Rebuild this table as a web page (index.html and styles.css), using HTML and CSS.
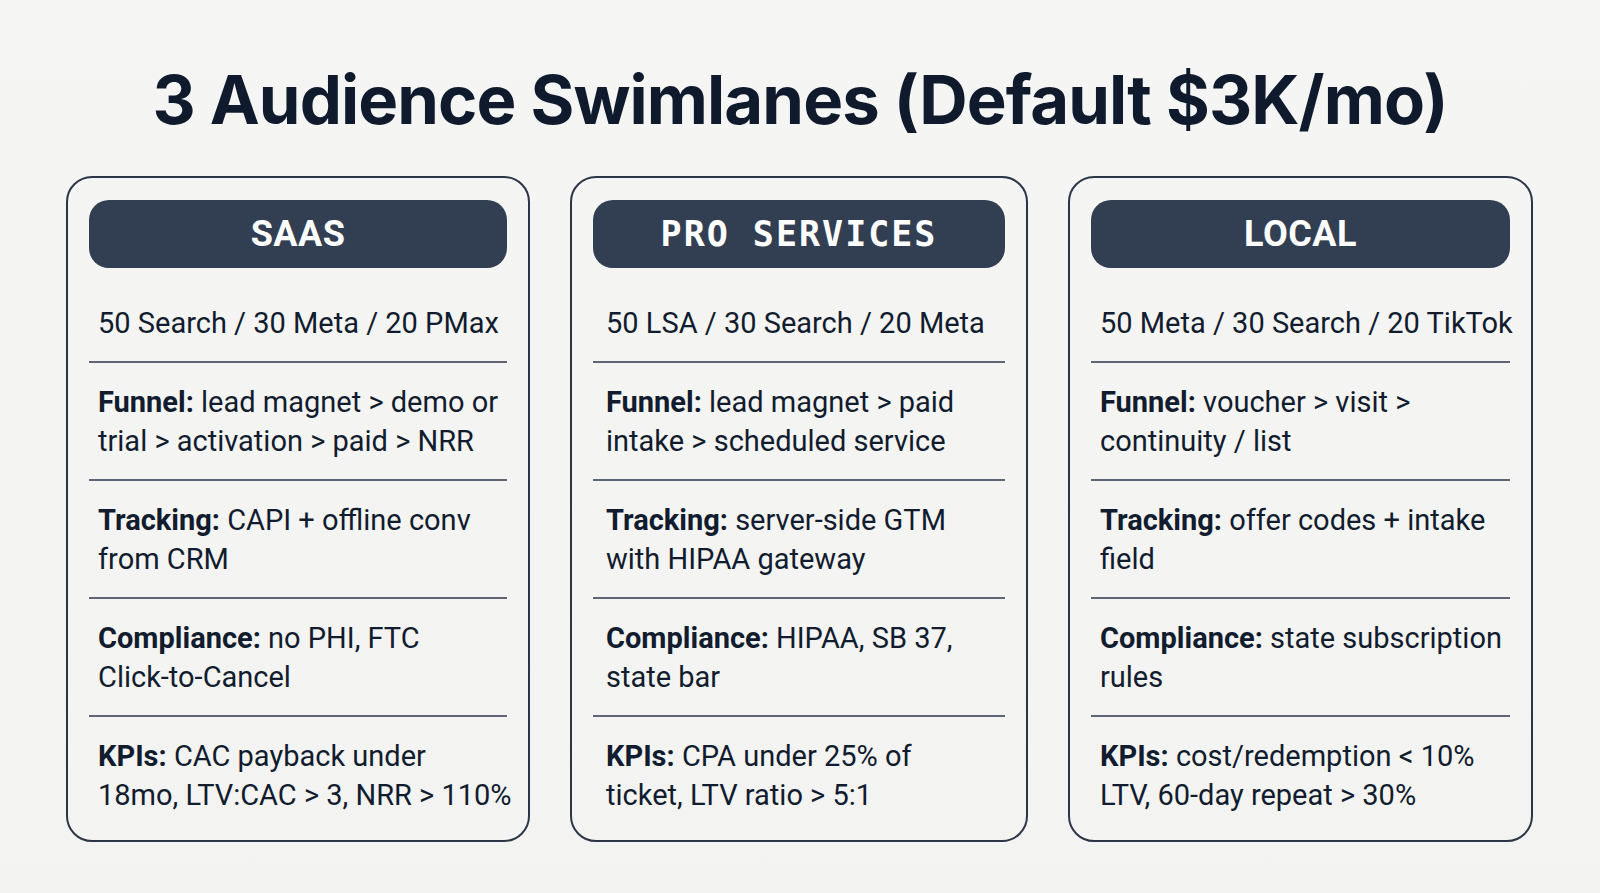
FILE: index.html
```html
<!DOCTYPE html>
<html lang="en">
<head>
<meta charset="utf-8">
<title>3 Audience Swimlanes</title>
<link rel="stylesheet" href="styles.css">
</head>
<body>
<main class="slide">
  <h1 class="title">3 Audience Swimlanes (Default $3K/mo)</h1>
  <div class="lanes">
    <section class="lane lane-saas">
      <div class="lane-head">SAAS</div>
      <div class="row row-first">50 Search / 30 Meta / 20 PMax</div>
      <div class="row"><b>Funnel:</b> lead magnet &gt; demo or<br>trial &gt; activation &gt; paid &gt; NRR</div>
      <div class="row"><b>Tracking:</b> CAPI + offline conv<br>from CRM</div>
      <div class="row"><b>Compliance:</b> no PHI, FTC<br>Click-to-Cancel</div>
      <div class="row"><b>KPIs:</b> CAC payback under<br>18mo, LTV:CAC &gt; 3, NRR &gt; 110%</div>
    </section>
    <section class="lane lane-pro">
      <div class="lane-head mono">PRO SERVICES</div>
      <div class="row row-first">50 LSA / 30 Search / 20 Meta</div>
      <div class="row"><b>Funnel:</b> lead magnet &gt; paid<br>intake &gt; scheduled service</div>
      <div class="row"><b>Tracking:</b> server-side GTM<br>with HIPAA gateway</div>
      <div class="row"><b>Compliance:</b> HIPAA, SB 37,<br>state bar</div>
      <div class="row"><b>KPIs:</b> CPA under 25% of<br>ticket, LTV ratio &gt; 5:1</div>
    </section>
    <section class="lane lane-local">
      <div class="lane-head">LOCAL</div>
      <div class="row row-first">50 Meta / 30 Search / 20 TikTok</div>
      <div class="row"><b>Funnel:</b> voucher &gt; visit &gt;<br>continuity / list</div>
      <div class="row"><b>Tracking:</b> offer codes + intake<br>field</div>
      <div class="row"><b>Compliance:</b> state subscription<br>rules</div>
      <div class="row"><b>KPIs:</b> cost/redemption &lt; 10%<br>LTV, 60-day repeat &gt; 30%</div>
    </section>
  </div>
</main>
</body>
</html>
```

FILE: styles.css
```css
* { box-sizing: border-box; }

html, body {
  margin: 0;
  padding: 0;
  background: #f4f4f2;
}

.slide {
  width: 1600px;
  height: 893px;
  background: linear-gradient(180deg, #f5f5f4 0%, #f3f3f1 100%);
  color: #0f1b2d;
  font-family: Roboto, "Liberation Sans", sans-serif;
  overflow: hidden;
}

.title {
  margin: 66px 0 0;
  font-family: Inter, "Liberation Sans", sans-serif;
  font-weight: 700;
  font-size: 67px;
  line-height: 67px;
  text-align: center;
  color: #0f1b2d;
  letter-spacing: -0.9px;
}

.lanes {
  display: grid;
  grid-template-columns: 464px 458px 465px;
  column-gap: 40px;
  margin-top: 43px;
  padding-left: 66px;
}

.lane {
  border: 2px solid #2c3647;
  border-radius: 26px;
  padding: 22px 21px 7px;
  display: flex;
  flex-direction: column;
}

.lane-head {
  height: 68px;
  border-radius: 20px;
  background: #323f52;
  color: #ffffff;
  display: flex;
  align-items: center;
  justify-content: center;
  font-family: Roboto, "Liberation Sans", sans-serif;
  font-weight: 700;
  font-size: 36px;
  letter-spacing: 0.5px;
}

.lane-head.mono {
  font-family: "DejaVu Sans Mono", "Liberation Mono", monospace;
  font-size: 35px;
  letter-spacing: 2px;
}

.row {
  border-top: 2px solid #5e6574;
  padding: 20px 0 18px 9px;
  font-size: 29px;
  line-height: 39px;
  white-space: nowrap;
  color: #111c2e;
}

.row b {
  font-weight: 700;
}

.row-first {
  border-top: none;
  padding-top: 36px;
}

.lane-pro .row { padding-left: 13px; }
```
